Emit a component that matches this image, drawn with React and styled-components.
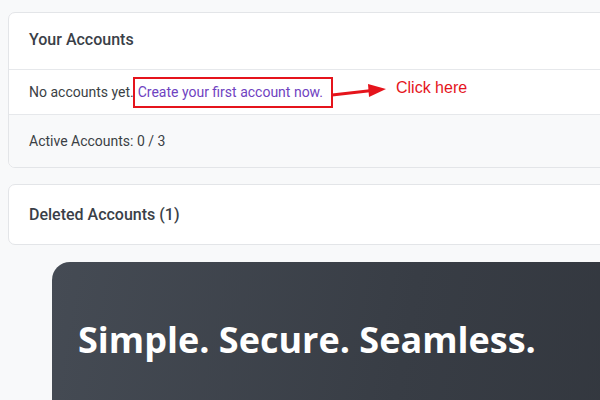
import React from 'react';
import styled, { createGlobalStyle } from 'styled-components';

const GlobalStyle = createGlobalStyle`
  html, body {
    margin: 0;
    padding: 0;
    background: #f8f9fa;
    font-family: Roboto, "Liberation Sans", sans-serif;
    overflow: hidden;
  }
`;

const Page = styled.div`
  width: 600px;
  height: 400px;
  overflow: hidden;
  padding: 12px 0 0 8px;
  box-sizing: border-box;
`;

const Card = styled.section`
  width: 900px;
  background: #fff;
  border: 1px solid #e3e5e8;
  border-radius: 7px;
  margin-bottom: ${(p) => p.$gap || 16}px;
  overflow: hidden;
`;

const CardHeader = styled.div`
  height: ${(p) => p.$h || 56}px;
  box-sizing: border-box;
  display: flex;
  align-items: center;
  padding: 0 20px ${(p) => p.$lift || 0}px;
  border-bottom: ${(p) => (p.$noBorder ? 'none' : '1px solid #e6e8eb')};
  font-size: 16px;
  font-weight: 500;
  color: #3a3f48;
`;

const Row = styled.div`
  position: relative;
  height: 44px;
  display: flex;
  align-items: center;
  padding: 0 20px;
  border-bottom: 1px solid #e6e8eb;
  font-size: 14px;
  color: #3b3f45;
`;

const Footer = styled.div`
  height: 52px;
  display: flex;
  align-items: center;
  padding: 0 20px;
  background: #f8f9fa;
  font-size: 14px;
  color: #3b3f45;
`;

const HighlightBox = styled.span`
  display: inline-flex;
  align-items: center;
  height: 27px;
  margin-left: -1px;
  padding: 0 8px 0 3px;
  border: 2px solid #e5141c;
`;

const Link = styled.a`
  color: #6f42c1;
  text-decoration: none;
`;

const Annotation = styled.div`
  position: absolute;
  left: 323px;
  top: 10px;
  height: 20px;
  display: flex;
  align-items: center;
  gap: 10px;
`;

const Note = styled.span`
  font-family: "Liberation Sans", Arial, sans-serif;
  font-size: 16px;
  color: #e5141c;
  margin-top: -4px;
`;

const Hero = styled.div`
  margin-left: 44px;
  width: 700px;
  height: 200px;
  border-radius: 18px;
  background: linear-gradient(100deg, #454b54 0%, #383d45 50%, #30343b 100%);
  padding: 53px 0 0 26px;
  box-sizing: border-box;
`;

const HeroTitle = styled.h1`
  margin: 0;
  font-family: "Open Sans", sans-serif;
  font-weight: 700;
  font-size: 36px;
  color: #fff;
`;

export default function App() {
  return (
    <Page>
      <GlobalStyle />
      <Card $gap={16}>
        <CardHeader $h={57} $lift={3}>Your Accounts</CardHeader>
        <Row>
          No accounts yet.
          <HighlightBox>
            <Link href="#">Create your first account now.</Link>
          </HighlightBox>
          <Annotation>
            <svg width="54" height="20" viewBox="0 0 54 20">
              <line x1="0" y1="15" x2="40" y2="10.5" stroke="#e5141c" strokeWidth="3" />
              <polygon points="36,4 54,9 37,17" fill="#e5141c" />
            </svg>
            <Note>Click here</Note>
          </Annotation>
        </Row>
        <Footer>Active Accounts: 0 / 3</Footer>
      </Card>
      <Card $gap={17}>
        <CardHeader $h={59} $lift={1} $noBorder>Deleted Accounts (1)</CardHeader>
      </Card>
      <Hero>
        <HeroTitle>Simple. Secure. Seamless.</HeroTitle>
      </Hero>
    </Page>
  );
}
